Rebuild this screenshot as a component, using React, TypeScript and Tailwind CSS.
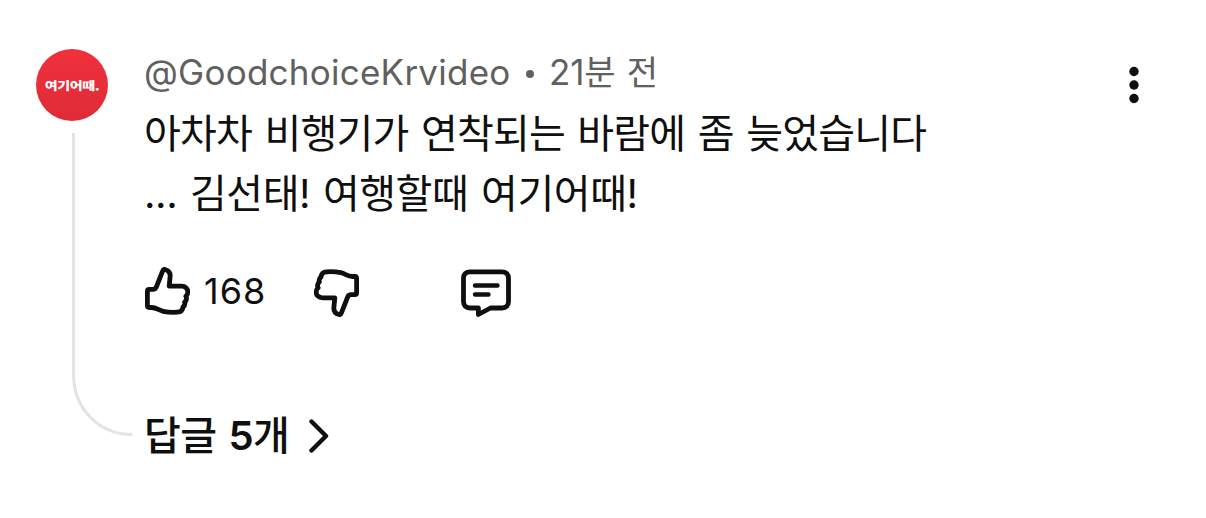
import type { ReactNode } from "react";

interface IconButtonProps {
  label: string;
  className?: string;
  children: ReactNode;
}

const THUMB_PATH =
  "M4.3 22.3H8C9.6 22.3 10.7 21.6 11.3 20.1L17.7 3.8C18.1 2.7 18.9 2.2 20 2.5C23.7 3.5 25.5 6.2 25.1 9.8L24.2 19.2H36.5C40.4 19.2 43 21.8 42.8 25.1C42.7 26.9 42.1 28.1 40.9 29.2C41.9 31.5 41.5 33.6 39.6 35.1C40.3 37.1 39.6 38.8 38 40C37.7 43 35.7 45 32.4 45.2C27.4 45.5 22.7 45.3 18.2 44.3C13.8 43.3 11.1 40.6 6.7 40.5H4.3C3.1 40.5 2.4 39.7 2.4 38.5V24.3C2.4 23.1 3.1 22.3 4.3 22.3Z";

function IconButton({ label, className = "", children }: IconButtonProps) {
  return (
    <button type="button" aria-label={label} className={`block shrink-0 ${className}`}>
      {children}
    </button>
  );
}

function ThumbIcon({ down = false }: { down?: boolean }) {
  return (
    <svg
      viewBox="0 0 45 48"
      className={`block h-[48px] w-[45px] ${down ? "rotate-180" : ""}`}
      fill="none"
      stroke="currentColor"
      strokeWidth="4.8"
      strokeLinejoin="round"
    >
      <path d={THUMB_PATH} />
    </svg>
  );
}

function CommentIcon() {
  return (
    <svg
      viewBox="0 0 50 49"
      className="block h-[49px] w-[50px]"
      fill="none"
      stroke="currentColor"
      strokeWidth="4.8"
      strokeLinecap="round"
      strokeLinejoin="round"
    >
      <path d="M9 2.8H41C45 2.8 47.5 5.3 47.5 9.3V32.5C47.5 36.5 45 39 41 39H29.5L17.4 45.5V39H9C5 39 2.5 36.5 2.5 32.5V9.3C2.5 5.3 5 2.8 9 2.8Z" />
      <path d="M14 16.5H36.5M14 25.5H27.5" strokeWidth="4.4" />
    </svg>
  );
}

function Avatar() {
  return (
    <div className="flex size-[72px] items-center justify-center rounded-full bg-linear-to-b from-[#f0303d] to-[#df2c37]">
      <span className="-mt-px scale-y-[0.82] font-['Noto_Sans_CJK_KR',sans-serif] text-[14px] leading-none font-black tracking-[-0.4px] whitespace-nowrap text-white">
        여기어때.
      </span>
    </div>
  );
}

export default function App() {
  return (
    <article
      lang="ko"
      className="flex h-[518px] w-[1206px] overflow-hidden bg-white pl-[36px] font-[Inter,'Noto_Sans_CJK_KR',sans-serif] text-[#0f0f0f]"
    >
      <div className="w-[108px] shrink-0 pt-[49px]">
        <Avatar />
        <svg
          viewBox="0 0 62 306"
          className="mt-[12px] ml-[35px] block h-[306px] w-[62px]"
          fill="none"
          stroke="#e3e3e3"
          strokeWidth="3"
        >
          <path d="M2.5 0V241C2.5 275 27 301.5 61.5 301.5" />
        </svg>
      </div>

      <div className="w-[830px] shrink-0">
        <header className="mt-[48px] flex h-[48px] items-center text-[35px] whitespace-nowrap text-[#606060]">
          <span className="w-[382px] tracking-[0.25px]">@GoodchoiceKrvideo</span>
          <span className="mt-[3px] mr-[15px] size-[8px] rounded-full bg-[#606060]" />
          <span className="tracking-[-0.2px] [word-spacing:2px]">
            21<span className="text-[34px]">분 전</span>
          </span>
        </header>

        <p className="mt-[8px] text-[40px] leading-[60px] tracking-[-0.8px] whitespace-nowrap [word-spacing:2px]">
          아차차 비행기가 연착되는 바람에 좀 늦었습니다
          <br />
          <span className="tracking-[-0.45px]">... 김선태! 여행할때 여기어때!</span>
        </p>

        <div className="mt-[43px] flex h-[50px] items-start">
          <IconButton label="좋아요" className="ml-px">
            <ThumbIcon />
          </IconButton>
          <span className="ml-[14px] w-[110px] text-[36px] leading-[49px] tracking-[1px]">168</span>
          <IconButton label="싫어요" className="mt-[2px]">
            <ThumbIcon down />
          </IconButton>
          <IconButton label="댓글" className="mt-[2px] ml-[102px]">
            <CommentIcon />
          </IconButton>
        </div>

        <button type="button" className="mt-[92px] flex h-[54px] items-center whitespace-nowrap">
          <span className="w-[165px] text-left text-[40px] font-medium tracking-[-0.6px] [word-spacing:2px]">
            답글 <span className="font-semibold">5</span>개
          </span>
          <svg
            viewBox="0 0 20 34"
            className="h-[34px] w-[20px]"
            fill="none"
            stroke="currentColor"
            strokeWidth="4.4"
            strokeLinecap="round"
            strokeLinejoin="round"
          >
            <path d="M2.5 2.5L17 17L2.5 31.5" />
          </svg>
        </button>
      </div>

      <IconButton label="더보기" className="mt-[66px] ml-[154px] h-[38px]">
        <svg viewBox="0 0 12 38" className="block h-[38px] w-[12px]" fill="currentColor">
          <circle cx="6" cy="5.5" r="4.7" />
          <circle cx="6" cy="19" r="4.7" />
          <circle cx="6" cy="32.5" r="4.7" />
        </svg>
      </IconButton>
    </article>
  );
}
